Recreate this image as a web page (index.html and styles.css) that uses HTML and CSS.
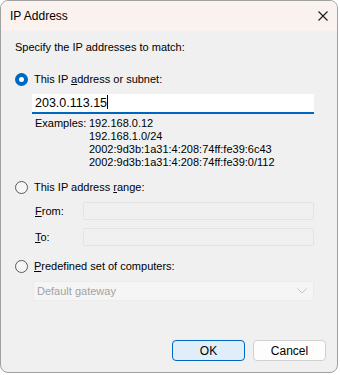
FILE: index.html
```html
<!DOCTYPE html>
<html lang="en">
<head>
    <meta charset="UTF-8">
    <meta name="viewport" content="width=device-width, initial-scale=1.0">
    <title>IP Address</title>
    <link rel="stylesheet" href="styles.css">
</head>
<body>
    <div class="window">
        <div class="titlebar">
            <span class="title">IP Address</span>
            <svg class="close" width="10" height="10" viewBox="0 0 10 10">
                <path d="M0.5 0.5 L9.5 9.5 M9.5 0.5 L0.5 9.5" stroke="#1a1a1a" stroke-width="1.1" fill="none"/>
            </svg>
        </div>
        <div class="content">
            <div class="prompt">Specify the IP addresses to match:</div>

            <div class="option">
                <span class="radio checked"></span>
                <span>This IP <u>a</u>ddress or subnet:</span>
            </div>
            <div class="textbox active">203.0.113.15<span class="caret"></span></div>
            <div class="examples">
                <span class="ex-label">Examples:</span>
                <div class="ex-list">
                    <div>192.168.0.12</div>
                    <div>192.168.1.0/24</div>
                    <div>2002:9d3b:1a31:4:208:74ff:fe39:6c43</div>
                    <div>2002:9d3b:1a31:4:208:74ff:fe39:0/112</div>
                </div>
            </div>

            <div class="option range">
                <span class="radio"></span>
                <span>This IP address <u>r</u>ange:</span>
            </div>
            <div class="field">
                <span class="field-label"><u>F</u>rom:</span>
                <div class="textbox disabled"></div>
            </div>
            <div class="field">
                <span class="field-label"><u>T</u>o:</span>
                <div class="textbox disabled"></div>
            </div>

            <div class="option predefined">
                <span class="radio"></span>
                <span><u>P</u>redefined set of computers:</span>
            </div>
            <div class="select">
                <span>Default gateway</span>
                <svg width="10" height="6" viewBox="0 0 10 6">
                    <path d="M0.5 0.5 L5 5 L9.5 0.5" stroke="#c4c4c4" stroke-width="1" fill="none"/>
                </svg>
            </div>
        </div>
        <div class="footer">
            <button class="btn default">OK</button>
            <button class="btn">Cancel</button>
        </div>
    </div>
</body>
</html>
```

FILE: styles.css
```css
body {
    margin: 0;
    background: #ffffff;
    font-family: "Liberation Sans", Arial, sans-serif;
    font-size: 11px;
    color: #000;
}
.window {
    width: 336px;
    height: 371px;
    border: 1px solid #a0a0a0;
    border-radius: 8px;
    background: #f0f0f0;
    display: flex;
    flex-direction: column;
    overflow: hidden;
}
.titlebar {
    height: 30px;
    background: #faf2ef;
    display: flex;
    align-items: center;
    justify-content: space-between;
    padding: 0 8px 0 9px;
}
.title {
    font-size: 12px;
}
.close {
    margin-right: 1px;
}
.content {
    padding: 8px 0 0 14px;
}
.prompt {
    line-height: 16px;
}
.option {
    display: flex;
    align-items: center;
    line-height: 16px;
    margin-top: 16px;
}
.option.range {
    margin-top: 10px;
}
.option.predefined {
    margin-top: 12px;
}
.radio {
    width: 11px;
    height: 11px;
    border: 1px solid #5a5a5a;
    border-radius: 50%;
    background: #f6f6f6;
    margin-right: 6px;
    box-sizing: content-box;
}
.radio.checked {
    width: 5px;
    height: 5px;
    border: 4px solid #0067c0;
    background: #ffffff;
}
.textbox {
    height: 20px;
    box-sizing: border-box;
    line-height: 18px;
    background: #ffffff;
}
.textbox.active {
    width: 282px;
    margin: 7px 0 0 17px;
    padding-left: 3px;
    font-size: 12.5px;
    border-bottom: 2px solid #0067c0;
}
.caret {
    display: inline-block;
    width: 1px;
    height: 14px;
    background: #000;
    vertical-align: -2px;
}
.examples {
    display: flex;
    margin: 3px 0 0 20px;
    line-height: 13px;
}
.ex-label {
    width: 54px;
    flex-shrink: 0;
}
.field {
    display: flex;
    align-items: center;
    margin: 7px 0 0 20px;
}
.field + .field {
    margin-top: 8px;
}
.field-label {
    width: 48px;
}
.textbox.disabled {
    width: 231px;
    height: 18px;
    background: #f0f0f0;
    border: 1px solid #e3e3e3;
    border-radius: 2px;
}
.select {
    width: 281px;
    height: 20px;
    box-sizing: border-box;
    margin: 7px 0 0 18px;
    padding: 0 6px 0 3px;
    display: flex;
    align-items: center;
    justify-content: space-between;
    background: #f5f5f5;
    border: 1px solid #ececec;
    border-radius: 2px;
    color: #a2a2a2;
}
.footer {
    margin-top: auto;
    display: flex;
    justify-content: flex-end;
    gap: 8px;
    padding: 0 11px 11px 0;
}
.btn {
    width: 73px;
    height: 21px;
    font-family: inherit;
    font-size: 12px;
    background: #fdfdfd;
    border: 1px solid #d0d0d0;
    border-radius: 4px;
    color: #000;
    padding: 0;
}
.btn.default {
    background: #e0eef9;
    border-color: #0067c0;
}
```
